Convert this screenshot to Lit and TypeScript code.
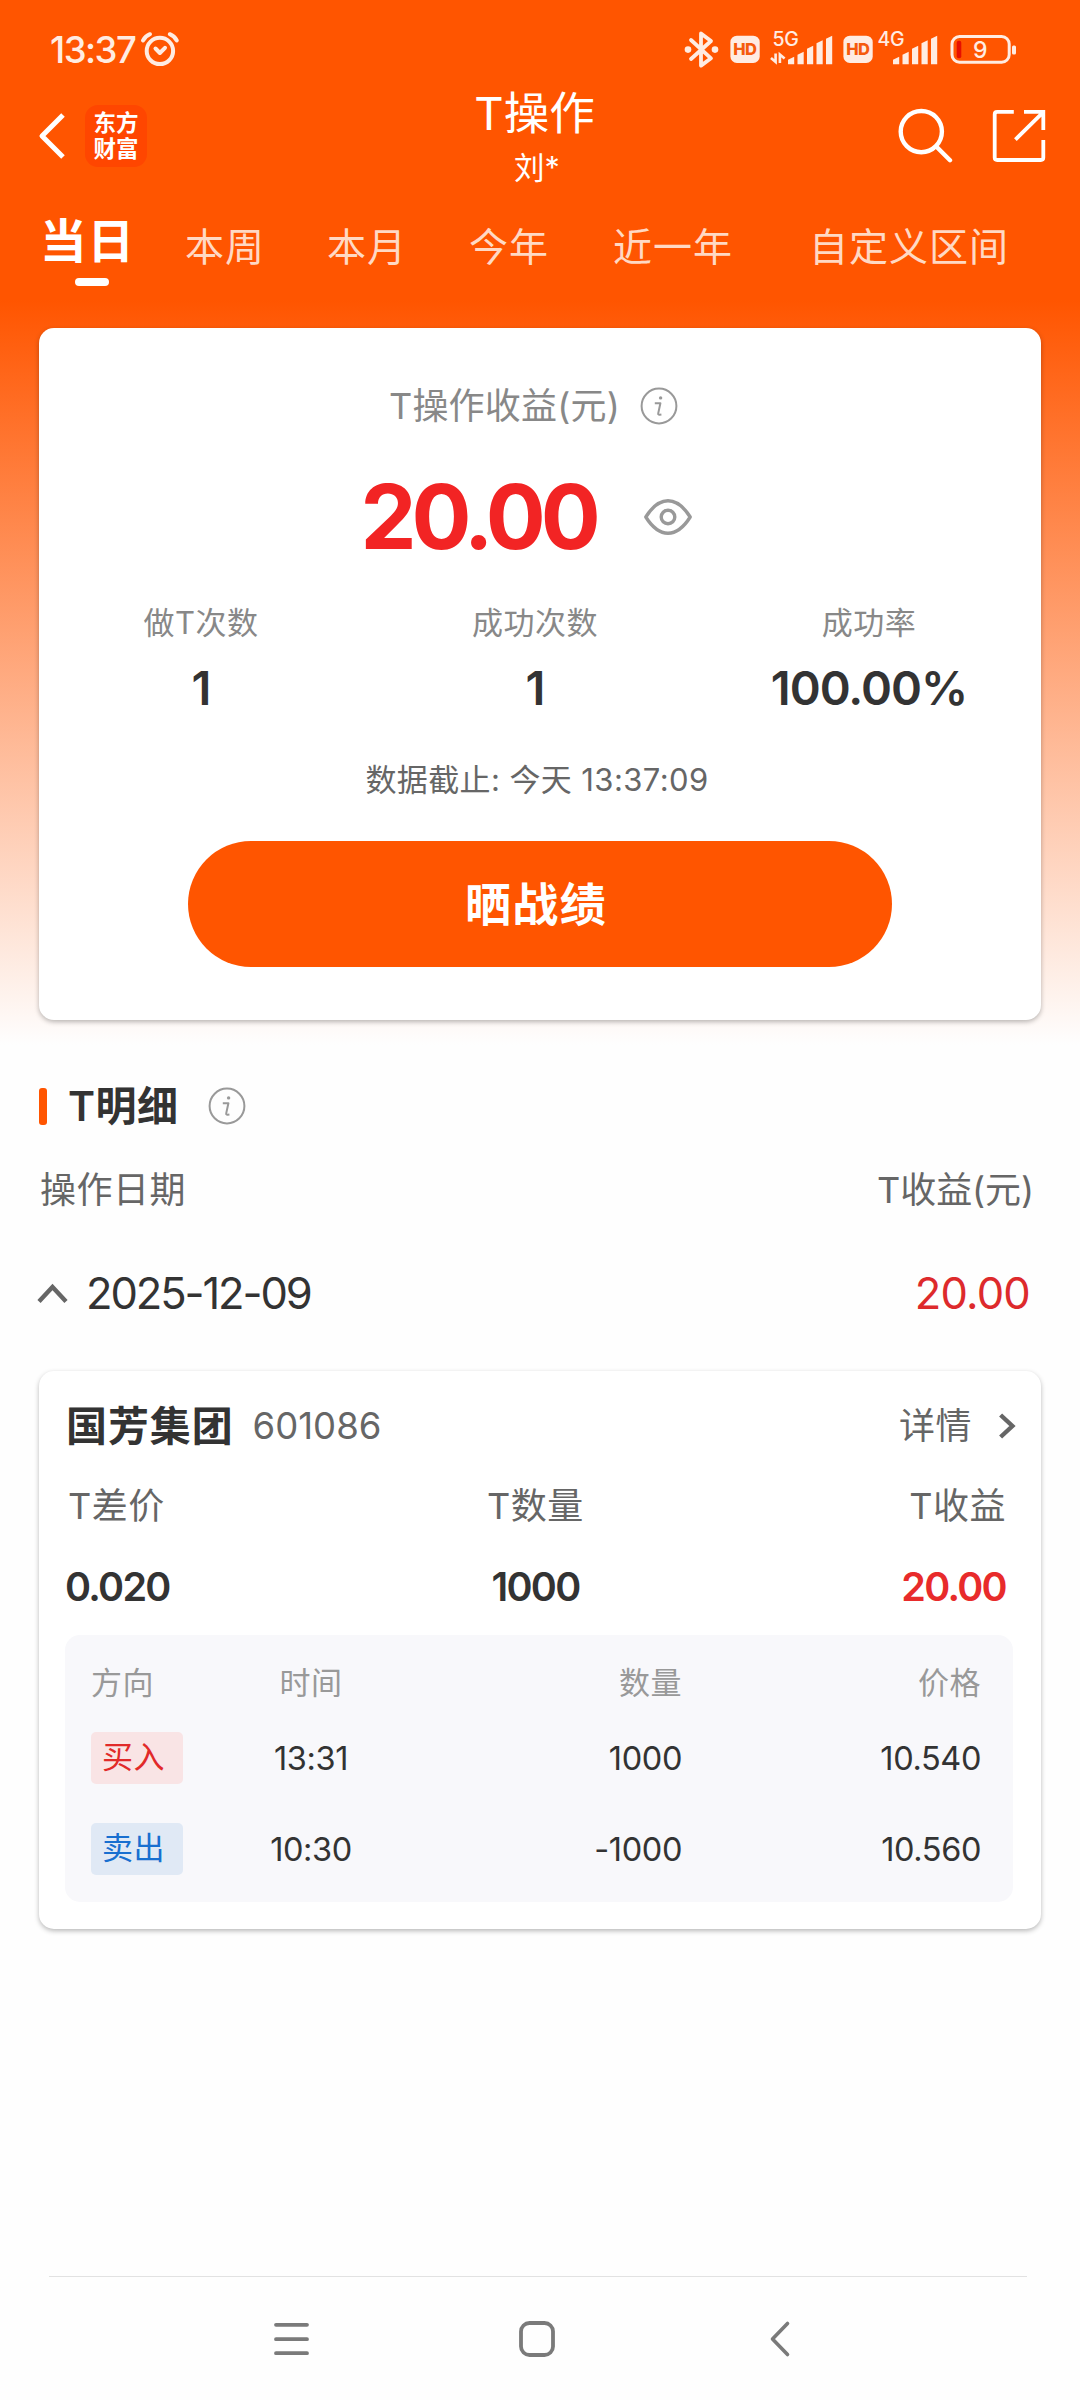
import { LitElement, html, css, svg } from "lit";
import { customElement, property } from "lit/decorators.js";
import { classMap } from "lit/directives/class-map.js";

interface Trade {
  side: "buy" | "sell";
  label: string;
  time: string;
  quantity: string;
  price: string;
}

const TABS = ["当日", "本周", "本月", "今年", "近一年", "自定义区间"];

const STATS = [
  { label: "做T次数", value: "1" },
  { label: "成功次数", value: "1" },
  { label: "成功率", value: "100.00%" },
];

const TRADES: Trade[] = [
  { side: "buy", label: "买入", time: "13:31", quantity: "1000", price: "10.540" },
  { side: "sell", label: "卖出", time: "10:30", quantity: "-1000", price: "10.560" },
];

/** Rising signal strength bars with slanted tops. */
const signalBars = (x: number) => {
  const tops = [57.5, 52.5, 46.5, 41, 36.5];
  return tops.map((top, i) => {
    const left = x + i * 9.5;
    return svg`<path d="M${left} 64.3V${top + 2.2}L${left + 6.2} ${top - 0.8}V64.3Z"></path>`;
  });
};

@customElement("status-bar")
class StatusBar extends LitElement {
  static styles = css`
    :host {
      display: flex;
      align-items: center;
      justify-content: space-between;
      box-sizing: border-box;
      height: 80px;
      padding: 20px 62px 0 50px;
      color: #ffece2;
    }
    .clock {
      display: flex;
      align-items: center;
      gap: 5px;
    }
    .time {
      font-size: 36.5px;
      font-weight: 500;
      line-height: 44px;
      letter-spacing: -1.5px;
    }
    svg {
      display: block;
    }
    .net {
      font-size: 19.5px;
      font-weight: 500;
      letter-spacing: -0.5px;
    }
    .hd {
      font-size: 16.5px;
      font-weight: 800;
      fill: #f55a0c;
      letter-spacing: -0.8px;
    }
    .level {
      font-size: 23px;
      font-weight: 500;
    }
  `;

  render() {
    return html`
      <div class="clock">
        <span class="time">13:37</span>
        <svg width="40" height="44" viewBox="142 28 40 44" fill="none" stroke="currentColor" stroke-width="4" stroke-linecap="round" stroke-linejoin="round">
          <circle cx="161.9" cy="50.9" r="13.2"></circle>
          <path d="M157.5 48.5L161.9 53L167 47.8M145 40.5Q147.5 36 152 34.2M178.8 40.5Q176.3 36 171.8 34.2"></path>
        </svg>
      </div>
      <svg width="336" height="44" viewBox="682 28 336 44" fill="currentColor">
        <path d="M691 40L711 58.3L701 65.6V33.4L711 41L691 59" fill="none" stroke="currentColor" stroke-width="3.8" stroke-linejoin="round" stroke-linecap="round"></path>
        <circle cx="688" cy="49.6" r="3.3"></circle>
        <circle cx="715" cy="49.6" r="3.3"></circle>
        <rect x="730.4" y="35.7" width="29.3" height="27.3" rx="6.5"></rect>
        <text class="hd" x="744.7" y="55.4" text-anchor="middle">HD</text>
        <text class="net" x="772.6" y="46.2">5G</text>
        <path d="M775.6 53.5V62L771 58M779.9 63V54.5L784.6 58.5" fill="none" stroke="currentColor" stroke-width="2.6"></path>
        ${signalBars(788)}
        <rect x="843.4" y="35.7" width="29.3" height="27.3" rx="6.5"></rect>
        <text class="hd" x="857.7" y="55.4" text-anchor="middle">HD</text>
        <text class="net" x="877.6" y="46.2">4G</text>
        ${signalBars(893)}
        <rect x="952" y="36.6" width="57.2" height="25.6" rx="7.5" fill="none" stroke="currentColor" stroke-width="3"></rect>
        <rect x="956.7" y="40.7" width="4.6" height="17.6" rx="2" fill="#e60f00"></rect>
        <text class="level" x="980.4" y="57.6" text-anchor="middle">9</text>
        <rect x="1012" y="45.5" width="4" height="9" rx="1.5"></rect>
      </svg>
    `;
  }
}

@customElement("info-icon")
class InfoIcon extends LitElement {
  static styles = css`
    :host {
      display: block;
      width: 38px;
      height: 38px;
    }
    svg {
      display: block;
    }
  `;

  render() {
    return html`
      <svg width="38" height="38" viewBox="0 0 38 38" fill="none" stroke="#999" stroke-width="2">
        <circle cx="19" cy="19" r="17.4"></circle>
        <path d="M14.8 16.2H20.4L18.2 26.4Q17.8 28.2 21.4 27.6" stroke-linejoin="round"></path>
        <circle cx="20.6" cy="10.9" r="1.7" fill="#999" stroke="none"></circle>
      </svg>
    `;
  }
}

@customElement("trade-row")
class TradeRow extends LitElement {
  @property({ attribute: false }) trade!: Trade;

  static styles = css`
    :host {
      display: grid;
      grid-template-columns: 133px 174px 284px 299px;
      align-items: center;
      height: 52px;
      font-size: 32.5px;
      letter-spacing: -0.4px;
      color: #333;
    }
    .tag {
      justify-self: start;
      box-sizing: border-box;
      width: 92px;
      height: 52px;
      padding-left: 11px;
      border-radius: 5px;
      font-size: 31px;
      line-height: 50px;
      letter-spacing: 0.5px;
    }
    .buy {
      background: #f9e4e5;
      color: #e12a2a;
    }
    .sell {
      background: #e0e9f5;
      color: #186fd0;
    }
    .time {
      text-align: center;
    }
    .num {
      text-align: right;
    }
  `;

  render() {
    const t = this.trade;
    return html`
      <span class=${classMap({ tag: true, [t.side]: true })}>${t.label}</span>
      <span class="time">${t.time}</span>
      <span class="num">${t.quantity}</span>
      <span class="num">${t.price}</span>
    `;
  }
}

@customElement("app-root")
class AppRoot extends LitElement {
  static styles = css`
    :host {
      display: flex;
      flex-direction: column;
      width: 1080px;
      height: 2400px;
      overflow: hidden;
      background: linear-gradient(180deg, #ff5500 0, #ff5500 300px, #fefefe 1045px);
      font-family: Inter, "Noto Sans CJK SC", sans-serif;
      letter-spacing: 0.5px;
      color: #333;
      white-space: nowrap;
    }
    svg {
      display: block;
      flex: none;
    }

    .header {
      display: grid;
      grid-template-columns: 1fr auto 1fr;
      align-items: center;
      height: 112px;
      padding: 0 33px 0 38px;
      color: #fff;
    }
    .brand,
    .actions {
      display: flex;
      align-items: center;
    }
    .brand {
      gap: 19px;
    }
    .logo {
      display: flex;
      flex-direction: column;
      justify-content: center;
      width: 62px;
      height: 62px;
      border-radius: 13px;
      background: #ff4600;
      font-size: 22.5px;
      font-weight: 700;
      line-height: 26px;
      letter-spacing: 0;
      text-align: center;
    }
    .titles {
      display: flex;
      flex-direction: column;
      align-items: center;
      gap: 12px;
      margin-right: 16px;
      padding-top: 3px;
    }
    .title {
      font-size: 45.5px;
      line-height: 48px;
      letter-spacing: 0;
    }
    .user {
      padding-left: 5px;
      font-size: 30.5px;
      line-height: 36px;
      letter-spacing: 0;
    }
    .actions {
      justify-content: flex-end;
      gap: 38px;
    }

    .tabs {
      display: flex;
      align-items: flex-start;
      gap: 62px;
      height: 98px;
      padding-left: 40px;
      color: #fff;
    }
    .tab {
      padding-top: 31px;
      font-size: 39px;
      line-height: 48px;
      letter-spacing: 1px;
      color: #ffd9c4;
    }
    .tab:nth-child(5) {
      margin-left: 2px;
    }
    .tab:last-child {
      margin-left: 14px;
    }
    .tab.active {
      display: flex;
      flex-direction: column;
      align-items: center;
      gap: 9px;
      margin-right: -12px;
      padding-top: 21px;
      font-size: 46.5px;
      font-weight: 600;
      line-height: 56px;
      color: #fff;
    }
    .tab.active::after {
      content: "";
      width: 34px;
      height: 8px;
      margin-left: 8px;
      border-radius: 4px;
      background: #fff;
    }

    .card {
      margin: 0 39px;
      border-radius: 15px;
      background: #fff;
      box-shadow: 0 2px 5px rgba(0, 0, 0, 0.28);
    }
    .summary {
      display: flex;
      flex-direction: column;
      align-items: center;
      box-sizing: border-box;
      height: 692px;
      margin-top: 38px;
      padding-top: 54px;
    }
    .caption {
      display: flex;
      align-items: center;
      gap: 20px;
      height: 48px;
      margin-right: 13px;
      font-size: 36px;
      line-height: 48px;
      letter-spacing: 0.2px;
      color: #888;
    }
    .total {
      display: flex;
      align-items: center;
      gap: 47px;
      margin: 42px 27px 0 0;
    }
    .amount {
      font-size: 89px;
      font-weight: 700;
      line-height: 90px;
      letter-spacing: -5.1px;
      color: #f22424;
    }
    .stats {
      display: grid;
      grid-template-columns: repeat(3, 1fr);
      align-self: stretch;
      margin: 41px 5px 0 -5px;
      text-align: center;
    }
    .stat-label {
      font-size: 31px;
      line-height: 40px;
      color: #888;
    }
    .stat-value {
      margin-top: 17px;
      font-size: 47px;
      font-weight: 600;
      line-height: 56px;
      letter-spacing: -1px;
    }
    .cutoff {
      margin: 44px 6px 0 0;
      font-size: 31px;
      line-height: 40px;
      letter-spacing: 0.4px;
      color: #666;
    }
    .share {
      width: 704px;
      margin-top: 41px;
      padding: 0 8px 0 0;
      box-sizing: border-box;
      border-radius: 63px;
      background: #ff5500;
      font-size: 46px;
      font-weight: 600;
      line-height: 127px;
      height: 126px;
      letter-spacing: 1.4px;
      text-align: center;
      color: #fff;
    }

    .section {
      display: flex;
      align-items: center;
      height: 48px;
      margin: 62px 39px 0;
      font-size: 41px;
      font-weight: 600;
      line-height: 48px;
    }
    .section::before {
      content: "";
      width: 8px;
      height: 37px;
      margin-right: 21px;
      border-radius: 3px;
      background: #ff5500;
    }
    .section info-icon {
      margin: -1px 0 0 29px;
    }
    .columns {
      display: flex;
      justify-content: space-between;
      margin: 36px 46px 0 40px;
      font-size: 36px;
      line-height: 48px;
      color: #666;
    }
    .columns > :last-child {
      letter-spacing: -0.1px;
    }
    .day {
      display: flex;
      align-items: center;
      height: 56px;
      margin: 51px 50px 0 37px;
      font-size: 43.5px;
      line-height: 56px;
    }
    .date {
      margin-left: 18px;
      letter-spacing: -2.1px;
    }
    .gain {
      margin-left: auto;
      letter-spacing: -0.8px;
      color: #dd2a2c;
    }

    .stock {
      box-sizing: border-box;
      height: 558px;
      margin-top: 50px;
      padding-top: 31px;
    }
    .stock-head {
      display: flex;
      align-items: center;
      height: 48px;
      padding: 0 24px 0 27px;
      line-height: 48px;
      color: #666;
    }
    .name {
      font-size: 41px;
      font-weight: 600;
      letter-spacing: 0.9px;
      color: #333;
    }
    .code {
      margin-left: 19px;
      font-size: 36.5px;
      letter-spacing: 0;
    }
    .more {
      margin-left: auto;
      margin-right: 25px;
      font-size: 36px;
    }
    .figures {
      display: grid;
      grid-template-columns: repeat(3, 1fr);
      row-gap: 33px;
      margin-top: 32px;
      padding: 0 35px 0 26px;
      line-height: 48px;
      text-align: center;
    }
    .figures > :nth-child(3n + 1) {
      text-align: left;
    }
    .figures > :nth-child(3n) {
      text-align: right;
    }
    .figure-label {
      font-size: 36px;
      color: #666;
    }
    .figure-label:first-child {
      padding-left: 3px;
    }
    .figure {
      font-size: 39.5px;
      font-weight: 600;
      letter-spacing: -1.7px;
    }
    .figure.up {
      color: #e82b2b;
    }
    .trades {
      display: flex;
      flex-direction: column;
      box-sizing: border-box;
      height: 267px;
      margin: 24px 28px 0 26px;
      padding: 28px 0 0 26px;
      border-radius: 15px;
      background: #f8f8fb;
    }
    .trades-head {
      display: grid;
      grid-template-columns: 133px 174px 284px 299px;
      margin-bottom: 29px;
      font-size: 31px;
      line-height: 40px;
      color: #999;
      text-align: right;
    }
    .trades-head > :first-child {
      text-align: left;
    }
    .trades-head > :nth-child(2) {
      text-align: center;
    }
    trade-row + trade-row {
      margin-top: 39px;
    }

    .nav {
      display: flex;
      align-items: center;
      box-sizing: border-box;
      height: 124px;
      margin: auto 53px 0 49px;
      padding-left: 224px;
      border-top: 1px solid #e2e2e2;
    }
    .nav .home {
      margin: 0 214px 0 209px;
    }
  `;

  private renderHeader() {
    return html`
      <div class="header">
        <div class="brand">
          <svg width="28" height="50" viewBox="0 0 28 50" fill="none" stroke="currentColor" stroke-width="5" stroke-linejoin="round">
            <path d="M25 4L4 25L25 46"></path>
          </svg>
          <div class="logo"><span>东方</span><span>财富</span></div>
        </div>
        <div class="titles">
          <div class="title">T操作</div>
          <div class="user">刘*</div>
        </div>
        <div class="actions">
          <svg width="56" height="56" viewBox="897 108 56 56" fill="none" stroke="currentColor" stroke-width="4.4" stroke-linecap="round">
            <circle cx="921.3" cy="131.6" r="20.6"></circle>
            <path d="M936.5 146.8L950 160.2"></path>
          </svg>
          <svg width="56" height="56" viewBox="991 108 56 56" fill="none" stroke="currentColor" stroke-width="3.8">
            <path d="M1013.8 111.9H997.2Q994.7 111.9 994.7 114.4V157.5Q994.7 160 997.2 160H1040.8Q1043.3 160 1043.3 157.5V140M1024 111.9H1043.3V130M1015.4 139.6L1042.5 112.8"></path>
          </svg>
        </div>
      </div>
    `;
  }

  private renderSummary() {
    return html`
      <section class="card summary">
        <div class="caption"><span>T操作收益(元)</span><info-icon></info-icon></div>
        <div class="total">
          <span class="amount">20.00</span>
          <svg width="50" height="40" viewBox="0 0 50 40" fill="none" stroke="#999" stroke-width="3.4">
            <path d="M2.8 20Q13 3.8 25 3.8T47.2 20Q37 36.2 25 36.2T2.8 20Z" stroke-linejoin="round"></path>
            <circle cx="25" cy="20" r="6.8"></circle>
          </svg>
        </div>
        <div class="stats">
          ${STATS.map(
            (s) => html`
              <div>
                <div class="stat-label">${s.label}</div>
                <div class="stat-value">${s.value}</div>
              </div>
            `,
          )}
        </div>
        <div class="cutoff">数据截止: 今天 13:37:09</div>
        <div class="share">晒战绩</div>
      </section>
    `;
  }

  private renderStock() {
    return html`
      <section class="card stock">
        <div class="stock-head">
          <span class="name">国芳集团</span>
          <span class="code">601086</span>
          <span class="more">详情</span>
          <svg width="20" height="30" viewBox="0 0 20 30" fill="none" stroke="#666" stroke-width="4.4">
            <path d="M3.6 4L15.4 15L3.6 26"></path>
          </svg>
        </div>
        <div class="figures">
          <span class="figure-label">T差价</span>
          <span class="figure-label">T数量</span>
          <span class="figure-label">T收益</span>
          <span class="figure">0.020</span>
          <span class="figure">1000</span>
          <span class="figure up">20.00</span>
        </div>
        <div class="trades">
          <div class="trades-head">
            <span>方向</span><span>时间</span><span>数量</span><span>价格</span>
          </div>
          ${TRADES.map((t) => html`<trade-row .trade=${t}></trade-row>`)}
        </div>
      </section>
    `;
  }

  render() {
    return html`
      <status-bar></status-bar>
      ${this.renderHeader()}
      <div class="tabs">
        ${TABS.map((t, i) => html`<span class=${classMap({ tab: true, active: i === 0 })}>${t}</span>`)}
      </div>
      ${this.renderSummary()}
      <div class="section"><span>T明细</span><info-icon></info-icon></div>
      <div class="columns"><span>操作日期</span><span>T收益(元)</span></div>
      <div class="day">
        <svg width="31" height="22" viewBox="0 0 31 22" fill="none" stroke="#666" stroke-width="4.4">
          <path d="M2 19.5L15.5 5L29 19.5"></path>
        </svg>
        <span class="date">2025-12-09</span>
        <span class="gain">20.00</span>
      </div>
      ${this.renderStock()}
      <div class="nav">
        <svg width="37" height="40" viewBox="0 0 37 40" stroke="#7a7a7a" stroke-width="3.8" stroke-linecap="round">
          <path d="M3 5.8H34M3 20.2H34M3 34.2H34"></path>
        </svg>
        <svg class="home" width="36" height="40" viewBox="0 0 36 40" fill="none" stroke="#7a7a7a" stroke-width="3.8">
          <rect x="2" y="4" width="32" height="32" rx="8.5"></rect>
        </svg>
        <svg width="22" height="40" viewBox="0 0 22 40" fill="none" stroke="#7a7a7a" stroke-width="3.6" stroke-linecap="round" stroke-linejoin="round">
          <path d="M18.5 4.5L3.5 20L18.5 35.5"></path>
        </svg>
      </div>
    `;
  }
}
